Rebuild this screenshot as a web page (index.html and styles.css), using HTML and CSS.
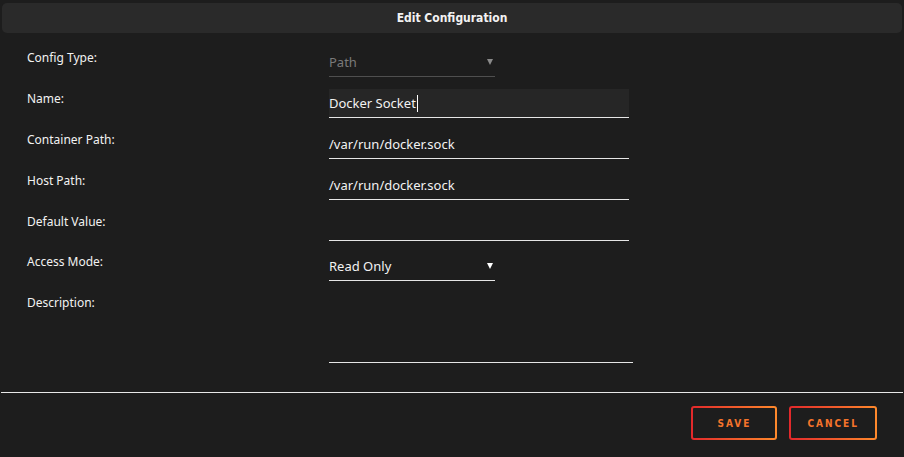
FILE: index.html
```html
<!DOCTYPE html>
<html lang="en">
<head>
  <meta charset="UTF-8" />
  <title>Edit Configuration</title>
  <link rel="stylesheet" href="styles.css">
</head>
<body>
  <div class="dialog">
    <header class="dialog-title">Edit Configuration</header>

    <form class="config-form">
      <div class="row">
        <label class="label">Config Type:</label>
        <div class="field select disabled">
          <span>Path</span>
          <span class="arrow"></span>
        </div>
      </div>

      <div class="row">
        <label class="label">Name:</label>
        <div class="field text focused">
          <span>Docker Socket</span><span class="caret"></span>
        </div>
      </div>

      <div class="row">
        <label class="label">Container Path:</label>
        <div class="field text"><span>/var/run/docker.sock</span></div>
      </div>

      <div class="row">
        <label class="label">Host Path:</label>
        <div class="field text"><span>/var/run/docker.sock</span></div>
      </div>

      <div class="row">
        <label class="label">Default Value:</label>
        <div class="field text"></div>
      </div>

      <div class="row">
        <label class="label">Access Mode:</label>
        <div class="field select">
          <span>Read Only</span>
          <span class="arrow"></span>
        </div>
      </div>

      <div class="row">
        <label class="label">Description:</label>
        <div class="field textarea"></div>
      </div>
    </form>

    <footer class="actions">
      <button type="button" class="btn">Save</button>
      <button type="button" class="btn">Cancel</button>
    </footer>
  </div>
</body>
</html>
```

FILE: styles.css
```css
:root {
  --bg-color: #1d1d1d;
  --panel-color: #2a2a2a;
  --text-color: #f2f2f2;
  --muted-color: #7a7a7a;
  --accent-start: #e2282b;
  --accent-end: #ff8a2c;
  --font-sans: 'Noto Sans', Arial, sans-serif;
  --font-cond: 'DejaVu Sans Condensed', 'Noto Sans', sans-serif;
}

body {
  margin: 0;
  background-color: var(--bg-color);
  color: var(--text-color);
  font-family: var(--font-sans);
}

.dialog {
  padding-top: 3px;
}

.dialog-title {
  margin: 0 2px;
  height: 30px;
  line-height: 31px;
  background-color: var(--panel-color);
  border-radius: 5px;
  text-align: center;
  font-family: var(--font-cond);
  font-weight: bold;
  font-size: 12px;
}

.config-form {
  display: flex;
  flex-direction: column;
  gap: 12px;
  padding: 15px 0 0 27px;
}

.row {
  display: grid;
  grid-template-columns: 302px 1fr;
  align-items: start;
}

.row:nth-child(6) {
  margin-top: -1px;
}

.label {
  font-size: 12px;
  line-height: 16px;
  padding-top: 2px;
}

.field {
  box-sizing: border-box;
  height: 29px;
  display: flex;
  align-items: center;
  border-bottom: 1px solid #e6e6e6;
  font-size: 13px;
  width: 300px;
}

.field.focused {
  background-color: #262626;
}

.caret {
  display: inline-block;
  width: 1px;
  height: 17px;
  background-color: #fff;
  margin-left: 1px;
}

.select {
  width: 166px;
  justify-content: space-between;
}

.select.disabled {
  color: var(--muted-color);
  border-bottom-color: #4f4f4f;
}

.arrow {
  width: 0;
  height: 0;
  margin-right: 2px;
  border-left: 3px solid transparent;
  border-right: 3px solid transparent;
  border-top: 6px solid #fff;
}

.select.disabled .arrow {
  border-top-color: #8a8a8a;
}

.textarea {
  width: 304px;
  height: 70px;
}

.actions {
  margin: 29px 1px 0;
  border-top: 1px solid #e8e8e8;
  display: flex;
  justify-content: flex-end;
  gap: 12px;
  padding: 13px 26px 0 0;
}

.btn {
  height: 34px;
  min-width: 86px;
  padding: 0 16px;
  border: 2px solid transparent;
  border-radius: 3px;
  background:
    linear-gradient(var(--bg-color), var(--bg-color)) padding-box,
    linear-gradient(90deg, var(--accent-start), var(--accent-end)) border-box;
  color: #f5742b;
  font-family: var(--font-cond);
  font-weight: bold;
  font-size: 10px;
  letter-spacing: 2px;
  text-transform: uppercase;
  cursor: pointer;
}
```
